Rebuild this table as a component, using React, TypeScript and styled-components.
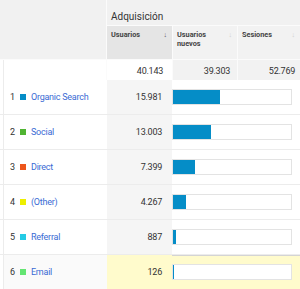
import styled, { createGlobalStyle } from 'styled-components';

const GlobalStyle = createGlobalStyle`
  body {
    margin: 0;
    background: #ffffff;
    font-family: Roboto, "Liberation Sans", Arial, sans-serif;
    color: #333333;
  }
`;

const Table = styled.div`
  width: 300px;
`;

const Head = styled.div`
  display: grid;
  grid-template-columns: 106px 65px 64px 1fr;
  grid-template-rows: 25px 33px 20px;
  column-gap: 1px;
  row-gap: 1px;
  background: #fbfbfb;
`;

const Corner = styled.div`
  grid-row: 1 / 3;
  grid-column: 1;
  background: #f1f1f1;
`;

const CornerTotal = styled.div`
  grid-row: 3;
  grid-column: 1;
  background: #ffffff;
  box-shadow: inset 3px 0 0 #ffffff, inset 4px 0 0 #ececec;
`;

const GroupTitle = styled.div`
  grid-row: 1;
  grid-column: 2 / 5;
  background: #f1f1f1;
  font-size: 10px;
  padding: 11px 0 0 4px;
  color: #333333;
`;

const ColHead = styled.div<{ $active?: boolean }>`
  grid-row: 2;
  background: ${(p) => (p.$active ? '#e5e5e5' : '#f2f2f2')};
  display: flex;
  justify-content: space-between;
  align-items: flex-start;
  padding: 5px 5px 0 4px;
  font-size: 7.3px;
  font-weight: 700;
  line-height: 8.5px;
  color: #444444;
`;

const SortArrow = styled.span<{ $active?: boolean }>`
  font-size: 7px;
  font-weight: 400;
  color: ${(p) => (p.$active ? '#555555' : '#cfcfcf')};
`;

const TotalCell = styled.div<{ $active?: boolean; $pad: number }>`
  grid-row: 3;
  background: ${(p) => (p.$active ? '#ffffff' : '#f2f2f2')};
  font-size: 9px;
  letter-spacing: -0.25px;
  text-align: right;
  padding: 6px ${(p) => p.$pad}px 0 0;
  color: #333333;
`;

const Row = styled.div<{ $selected?: boolean }>`
  display: grid;
  grid-template-columns: 107px 65px 1fr;
  height: 35px;
  box-sizing: border-box;
  border-bottom: 1px solid ${(p) => (p.$selected ? '#d4d4d4' : '#ececec')};
  box-shadow: ${(p) => (p.$selected ? 'inset 0 1px 0 #d4d4d4' : 'none')};
  background: ${(p) => (p.$selected ? '#fffbcc' : '#ffffff')};
  font-size: 9px;
  letter-spacing: -0.25px;
`;

const NameCell = styled.div<{ $selected?: boolean }>`
  display: flex;
  align-items: center;
  background: ${(p) => (p.$selected ? '#fafafa' : '#ffffff')};
  box-shadow: inset 3px 0 0 #ffffff, inset 4px 0 0 #ececec;
  padding-left: 10px;
  white-space: nowrap;
`;

const Rank = styled.span`
  color: #333333;
  width: 10px;
`;

const Swatch = styled.span<{ $color: string }>`
  width: 6px;
  height: 6px;
  background: ${(p) => p.$color};
  margin-right: 5px;
`;

const Label = styled.span`
  color: #3a6bd4;
`;

const ValueCell = styled.div<{ $selected?: boolean }>`
  display: flex;
  align-items: center;
  justify-content: flex-end;
  background: ${(p) => (p.$selected ? '#fffbcc' : '#f5f5f5')};
  padding-right: 10px;
  color: #333333;
`;

const BarCell = styled.div`
  display: flex;
  align-items: center;
`;

const Track = styled.div`
  width: 120px;
  height: 16px;
  box-sizing: border-box;
  border: 1px solid #e3e3e3;
  background: #ffffff;
  display: flex;
`;

const Fill = styled.div`
  height: 100%;
  background: #058dc7;
`;

const rows = [
  { label: 'Organic Search', value: 15981, color: '#058dc7' },
  { label: 'Social', value: 13003, color: '#50b432' },
  { label: 'Direct', value: 7399, color: '#ed561b' },
  { label: '(Other)', value: 4267, color: '#edef00' },
  { label: 'Referral', value: 887, color: '#24cbe5' },
  { label: 'Email', value: 126, color: '#64e572' },
];

const total = 40143;
const fmt = (n: number) => n.toLocaleString('de-DE');

function App() {
  return (
    <>
      <GlobalStyle />
      <Table>
        <Head>
          <Corner />
          <GroupTitle>Adquisición</GroupTitle>
          <ColHead $active>
            <span>Usuarios</span>
            <SortArrow $active>↓</SortArrow>
          </ColHead>
          <ColHead>
            <span>
              Usuarios
              <br />
              nuevos
            </span>
            <SortArrow>↓</SortArrow>
          </ColHead>
          <ColHead>
            <span>Sesiones</span>
            <SortArrow>↓</SortArrow>
          </ColHead>
          <CornerTotal />
          <TotalCell $active $pad={9}>40.143</TotalCell>
          <TotalCell $pad={7}>39.303</TotalCell>
          <TotalCell $pad={5}>52.769</TotalCell>
        </Head>
        {rows.map((r, i) => {
          const selected = i === rows.length - 1;
          return (
            <Row key={r.label} $selected={selected}>
              <NameCell $selected={selected}>
                <Rank>{i + 1}</Rank>
                <Swatch $color={r.color} />
                <Label>{r.label}</Label>
              </NameCell>
              <ValueCell $selected={selected}>{fmt(r.value)}</ValueCell>
              <BarCell>
                <Track>
                  <Fill style={{ width: `${(r.value / total) * 100}%` }} />
                </Track>
              </BarCell>
            </Row>
          );
        })}
      </Table>
    </>
  );
}

export default App;
